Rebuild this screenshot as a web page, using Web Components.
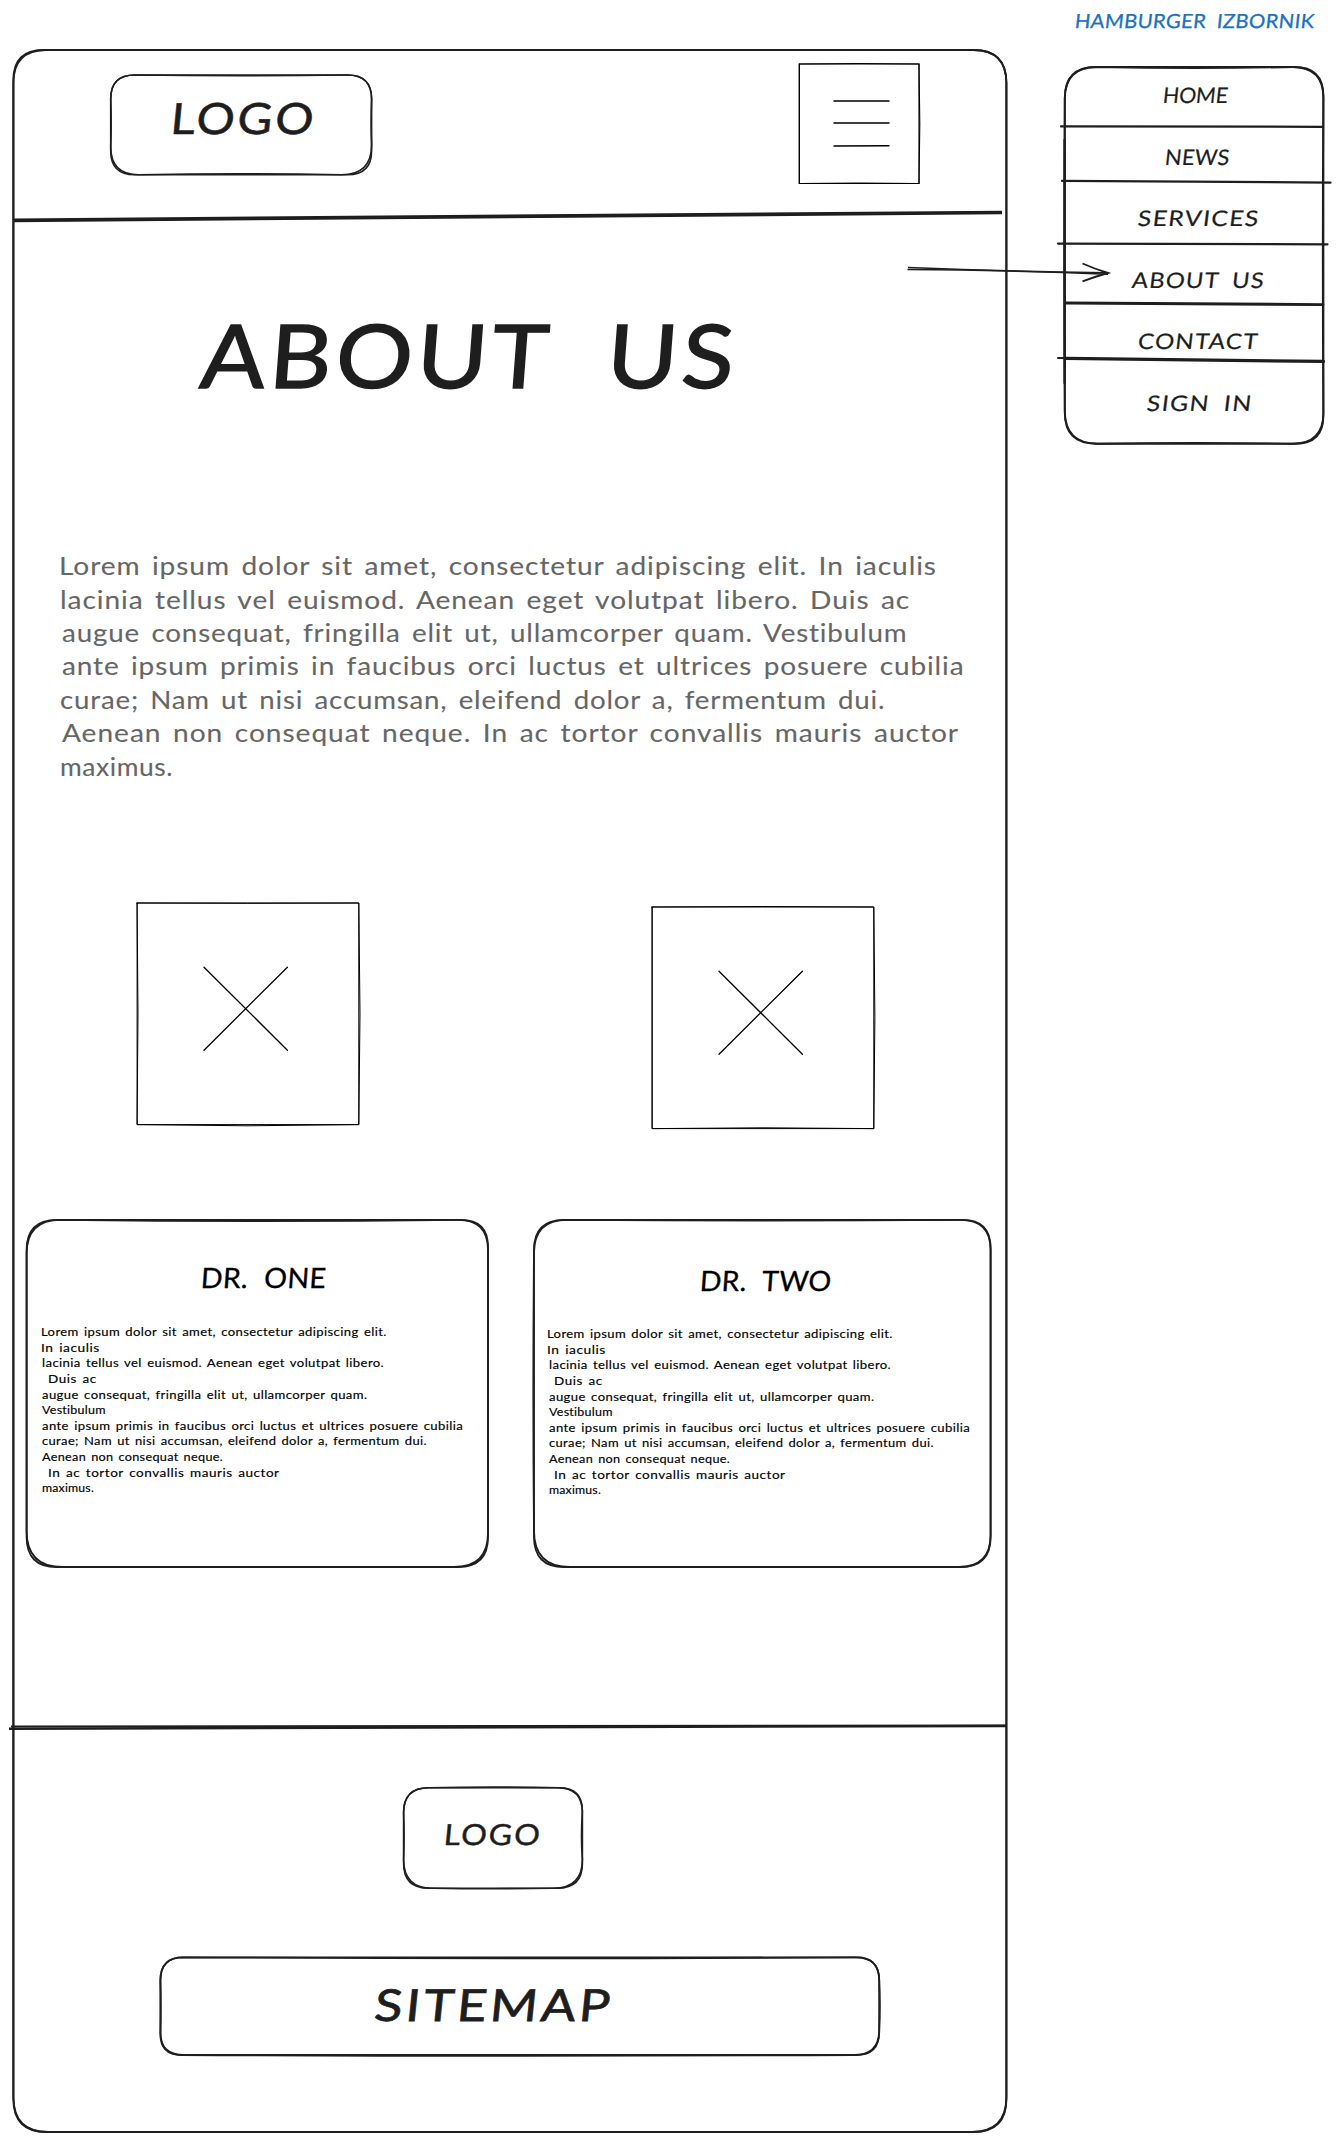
<!DOCTYPE html>
<html lang="en">
<head>
<meta charset="utf-8">
<title>About us wireframe</title>
<style>
html,body{margin:0;background:#fff}
body{width:1340px;height:2142px;overflow:hidden;color:#1e1e1e}
</style>
</head>
<body>
<wire-board></wire-board>
<script>
const FAMILY = 'Virgil, Lato, "Open Sans", sans-serif';
const pen = document.createElement('canvas').getContext('2d');

/* One line of lettering, widened and tracked so that its ink spans the "w" attribute. */
class InkText extends HTMLElement {
  connectedCallback() {
    if (this.shadowRoot) return;
    const num = (k, d) => parseFloat(this.getAttribute(k) ?? d);
    const size = num('size', 16), lead = num('lead', size * 1.25);
    const weight = this.getAttribute('weight') || '400';
    const text = this.textContent;
    const space = num('space', .12) * size;
    const slant = num('slant', 0);
    const lean = Math.tan(Math.abs(slant) * Math.PI / 180) * size * .6;
    const width = num('w', 100) - lean;
    pen.font = `${weight} ${size}px ${FAMILY}`;
    const m = pen.measureText(text);
    const gaps = text.split(' ').length - 1;
    const ink = m.actualBoundingBoxLeft + m.actualBoundingBoxRight + gaps * space;
    const stretch = 1 + (width / ink - 1) * .6;
    const track = (width / stretch - ink) / Math.max(1, text.length - 1);
    this.attachShadow({mode: 'open'}).innerHTML = `
      <style>
        :host{display:block;height:${lead}px;width:max-content;
          font:${weight} ${size}px/${lead}px ${FAMILY};font-variant-ligatures:none}
        span{display:block;white-space:pre;margin-left:${m.actualBoundingBoxLeft * stretch + lean / 2}px;
          letter-spacing:${track}px;word-spacing:${space}px;
          -webkit-text-stroke:${num('stroke', 0)}px currentColor;stroke-linejoin:round;
          transform-origin:0 50%;transform:scaleX(${stretch}) skewX(${slant}deg)}
      </style><span><slot></slot></span>`;
  }
}
customElements.define('ink-text', InkText);

/* A box with a twice-drawn, slightly bowed outline. edges: left top right bottom; bow: top right bottom left. */
class InkBox extends HTMLElement {
  connectedCallback() {
    if (this.shadowRoot) return;
    const list = (k, d) => (this.getAttribute(k) || d).split(' ').map(Number);
    const [w, h] = list('size', '100 100');
    const [l, t, r, b] = list('edges', '1 1 99 99');
    const bow = list('bow', '0 0 0 0');
    const cut = list('cut', '0 0 0 0');
    const rad = Number(this.getAttribute('radius') || 0);
    const sw = this.getAttribute('pen') || '1.5';
    const color = this.getAttribute('ink') || '#1e1e1e';
    const outline = (bw, c) => {
      const [a, d, e, f] = c.map(v => rad + v), mx = (l + r) / 2, my = (t + b) / 2;
      return `M${l + a} ${t}Q${mx} ${t + bw[0] * 2} ${r - d} ${t}Q${r} ${t} ${r} ${t + d}` +
        `Q${r + bw[1] * 2} ${my} ${r} ${b - e}Q${r} ${b} ${r - e} ${b}` +
        `Q${mx} ${b + bw[2] * 2} ${l + f} ${b}Q${l} ${b} ${l} ${b - f}` +
        `Q${l + bw[3] * 2} ${my} ${l} ${t + a}Q${l} ${t} ${l + a} ${t}Z`;
    };
    const extra = this.getAttribute('rules') || '';
    this.attachShadow({mode: 'open'}).innerHTML = `
      <style>
        :host{display:grid;width:${w}px;height:${h}px;flex:none}
        svg,div{grid-area:1/1;min-width:0}
        svg{display:block;overflow:visible}
        div{height:100%}
      </style>
      <svg width="${w}" height="${h}" fill="none" stroke="${color}" stroke-width="${sw}" stroke-linecap="round">
        <path d="${outline([0, 0, 0, 0], [0, 0, 0, 0])}"/>
        <path d="${outline(bow, cut)}"/>
        ${extra ? extra.split('|').map(x => { const [d, s] = x.split('@'); return `<path d="${d}" stroke-width="${s || 2}"/>`; }).join('') : ''}
      </svg><div><slot></slot></div>`;
  }
}
customElements.define('ink-box', InkBox);

/* Free pen strokes: "path@width" entries separated by |. */
class InkLine extends HTMLElement {
  connectedCallback() {
    if (this.shadowRoot) return;
    const [w, h] = this.getAttribute('size').split(' ');
    this.attachShadow({mode: 'open'}).innerHTML = `
      <style>:host{display:block;width:${w}px;height:${h}px}svg{display:block;overflow:visible}</style>
      <svg width="${w}" height="${h}" fill="none" stroke="#1e1e1e">${this.getAttribute('strokes').split('|')
        .map(x => { const [d, s] = x.split('@'); return `<path d="${d}" stroke-width="${s}"/>`; }).join('')}</svg>`;
  }
}
customElements.define('ink-line', InkLine);

/* Site menu that the hamburger opens. */
class WireMenu extends HTMLElement {
  connectedCallback() {
    if (this.shadowRoot) return;
    const items = [['HOME', 107.5, 65], ['NEWS', 109.5, 64], ['SERVICES', 81, 121], ['ABOUT US', 75.5, 133], ['CONTACT', 82, 120], ['SIGN IN', 90.5, 104]];
    this.attachShadow({mode: 'open'}).innerHTML = `
      <style>
        :host{display:block;width:284px}
        .cap{color:#1971c2;padding:9px 0 0 19px;height:65px;box-sizing:border-box}
        nav{display:flex;flex-direction:column}
      </style>
      <div class="cap"><ink-text size="19.5" lead="24" w="239.5" slant="-6" stroke=".3" space=".25">HAMBURGER IZBORNIK</ink-text></div>
      <ink-box size="278 380" edges="8.8 2 267.4 378.7" radius="31" pen="1.9" bow="1 -.6 -.8 -.5" cut="1 -2 -3 2"
        rules="M5 61.4L266 61.8@2.2|M6 115.8L274.5 117.6@2.3|M2 178.6L271.5 179.3@2.2|M10 238L267 239.6@2.9|M2 293L20 293.3@2|M10 293.4L267.5 296.4@3.2|M8.6 75V318@2.4">
        <nav>${items.map(([t, x, w]) => `<ink-text style="margin-left:${x}px" size="21.5" lead="61.5" w="${w}" slant="-6" stroke=".2" space=".25">${t}</ink-text>`).join('')}</nav>
      </ink-box>`;
  }
}
customElements.define('wire-menu', WireMenu);

/* Empty picture with a cross in its middle. */
class WirePicture extends HTMLElement {
  connectedCallback() {
    if (this.shadowRoot) return;
    this.attachShadow({mode: 'open'}).innerHTML = `
      <style>:host{display:block}</style>
      <ink-box size="224 224" edges="1.1 1 222.8 222.6" pen="1" ink="#000" bow="${this.getAttribute('bow')}"
        rules="M68 65.2L151.4 148.2@1.3|M151.4 65.2L68 148.2@1.3"></ink-box>`;
  }
}
customElements.define('wire-picture', WirePicture);

/* Doctor card: slotted title above the short biography. */
class WireCard extends HTMLElement {
  connectedCallback() {
    if (this.shadowRoot) return;
    const lines = [['Lorem ipsum dolor sit amet, consectetur adipiscing elit.', 345], ['In iaculis', 57], ['lacinia tellus vel euismod. Aenean eget volutpat libero.', 343], ['Duis ac', 47.5, 7], ['augue consequat, fringilla elit ut, ullamcorper quam.', 325.5], ['Vestibulum', 63], ['ante ipsum primis in faucibus orci luctus et ultrices posuere cubilia', 421], ['curae; Nam ut nisi accumsan, eleifend dolor a, fermentum dui.', 385], ['Aenean non consequat neque.', 181], ['In ac tortor convallis mauris auctor', 231, 7], ['maximus.', 52]];
    const a = k => this.getAttribute(k);
    this.attachShadow({mode: 'open'}).innerHTML = `
      <style>
        :host{display:block;color:#000}
        .title{padding:${a('top')}px 0 0 ${a('indent')}px}
        .bio{padding:${a('gap')}px 0 0 ${a('left')}px}
      </style>
      <ink-box size="${a('width')} 351" edges="${a('edges')}" radius="30" pen="1.8" bow="${a('bow')}" cut="${a('cut')}">
        <div class="title"><slot></slot></div>
        <div class="bio">${lines.map(([t, w, x]) => `<ink-text style="margin-left:${x || 0}px" size="11.8" lead="15.63" w="${w}" stroke=".15">${t}</ink-text>`).join('')}</div>
      </ink-box>`;
  }
}
customElements.define('wire-card', WireCard);

class WireBoard extends HTMLElement {
  connectedCallback() {
    if (this.shadowRoot) return;
    const intro = [['Lorem ipsum dolor sit amet, consectetur adipiscing elit. In iaculis', 875], ['lacinia tellus vel euismod. Aenean eget volutpat libero. Duis ac', 850.5], ['augue consequat, fringilla elit ut, ullamcorper quam. Vestibulum', 845], ['ante ipsum primis in faucibus orci luctus et ultrices posuere cubilia', 900], ['curae; Nam ut nisi accumsan, eleifend dolor a, fermentum dui.', 823], ['Aenean non consequat neque. In ac tortor convallis mauris auctor', 896.5], ['maximus.', 110.5]];
    this.attachShadow({mode: 'open'}).innerHTML = `
      <style>
        :host{display:flex;position:relative;width:1340px;height:2142px;background:#fff}
        .phone{margin:50px 0 0 13px}
        wire-menu{margin-left:49px}
        header{display:flex;align-items:flex-start;height:160px}
        .brand{margin:24px 0 0 97px}
        .brand ink-text{padding:18.4px 0 0 63px}
        .burger{margin:13px 0 0 425px}
        h1{margin:80px 0 0 186px;font-weight:400;height:100px}
        .intro{margin:145.3px 0 0 48.5px;color:#666;height:233.8px}
        .pictures{display:flex;gap:291px;margin:118.9px 0 0 123px;height:228px}
        .pictures :last-child{margin-top:4px}
        .cards{display:flex;gap:44px;margin:88px 0 151px 12px}
        .mini{margin:52px 0 0 389px}
        .mini ink-text{padding:27.8px 0 0 43.5px}
        .sitemap{margin:66px 0 0 146px}
        .sitemap ink-text{padding:19.7px 0 0 216px}
        .arrow{position:absolute;left:907px;top:260px}
      </style>
      <ink-box class="phone" size="994 2083" edges=".4 0 993.4 2082" radius="33" pen="1.9" cut="-3 0 2 2">
        <header>
          <ink-box class="brand" size="263 102" edges=".7 1 261.6 100.7" radius="24" pen="1.6" bow=".8 -.5 -1 .5" cut="0 0 6 4">
            <ink-text size="43" lead="52" w="140" slant="-5" stroke=".6">LOGO</ink-text>
          </ink-box>
          <ink-box class="burger" size="122 122" edges="1.3 1 121 120.5" pen="1.1" ink="#000" bow="-.5 .8 -.4 0"
            rules="M36 38L91 38@1.5|M36 60.1L91 60.1@1.5|M36 83L91 82.7@1.5"></ink-box>
        </header>
        <ink-line size="994 14" strokes="M0 10.4L989 2.5@3.7"></ink-line>
        <h1><ink-text size="88" lead="100" w="536" slant="-4" stroke="1.4" space=".3">ABOUT US</ink-text></h1>
        <div class="intro">${intro.map(([t, w]) => `<ink-text size="25" lead="33.4" w="${w}" stroke=".1">${t}</ink-text>`).join('')}</div>
        <div class="pictures"><wire-picture bow=".3 1.2 1.2 .9"></wire-picture><wire-picture bow="-.5 1.1 -.8 0"></wire-picture></div>
        <section class="cards">
          <wire-card width="464" edges="1.6 1.8 463 349" top="41.5" indent="177" gap="28.6" left="17" bow="1.2 0 0 0" cut="4 -3 4 6">
            <ink-text size="28" lead="36" w="123" slant="-4" stroke=".3" space=".3">DR. ONE</ink-text>
          </wire-card>
          <wire-card width="459" edges="1 1.8 457.6 349" top="44.5" indent="168" gap="27.6" left="15.5" bow=".8 0 0 -.7" cut="3 -2 2 6">
            <ink-text size="28" lead="36" w="131" slant="-4" stroke=".3" space=".3">DR. TWO</ink-text>
          </wire-card>
        </section>
        <footer>
          <ink-line size="994 14" strokes="M-4 8.7L993 6@2.4|M-2 6.6L993 5.6@2"></ink-line>
          <ink-box class="mini" size="182 104" edges="1.6 1.7 180.4 102.2" radius="25" pen="1.6" bow="-.6 -.9 .5 .5" cut="0 -2 4 4">
            <ink-text size="29" lead="40" w="94" slant="-5" stroke=".4">LOGO</ink-text>
          </ink-box>
          <ink-box class="sitemap" size="722 101" edges="1.4 1.3 720.2 99" radius="23" pen="1.8" bow="1 .7 .9 .4" cut="0 0 2 -2">
            <ink-text size="44" lead="56" w="236" slant="-5" stroke=".8">SITEMAP</ink-text>
          </ink-box>
        </footer>
      </ink-box>
      <wire-menu></wire-menu>
      <ink-line class="arrow" size="203 26" strokes="M.5 9.5Q100 10 201 14.2@1.5|M1 7.6Q100 11.4 199 12.8@1.5|M175.5 3.5Q188 9 201 13Q187 17 175.5 21.3@1.9"></ink-line>`;
  }
}
customElements.define('wire-board', WireBoard);
</script>
</body>
</html>
